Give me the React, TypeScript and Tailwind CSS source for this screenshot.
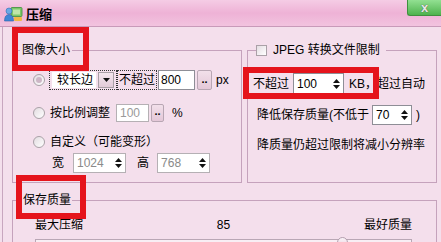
import React from "react";

function Radio({ checked }: { checked?: boolean }) {
  return (
    <span className="w-[12px] h-[12px] rounded-full border border-[#a9a1a7] bg-gradient-to-br from-[#e2dce0] to-[#ffffff] flex items-center justify-center shrink-0">
      {checked && <span className="w-[6px] h-[6px] rounded-full bg-[#cdb6c6]" />}
    </span>
  );
}

function Spin() {
  return (
    <span className="flex flex-col items-center gap-[2px] shrink-0">
      <svg width="7" height="4" viewBox="0 0 7 4">
        <path d="M3.5 0L7 4H0z" fill="#111" />
      </svg>
      <svg width="7" height="4" viewBox="0 0 7 4">
        <path d="M0 0h7L3.5 4z" fill="#111" />
      </svg>
    </span>
  );
}

function Dots({ className }: { className: string }) {
  return (
    <span
      className={
        "flex items-end justify-center pb-[4px] border border-[#b8a6b3] rounded-[2px] bg-gradient-to-b from-[#f2e0ea] to-[#e4c8d8] text-[11px] font-bold leading-none shrink-0 " +
        className
      }
    >
      ..
    </span>
  );
}

function Icon() {
  return (
    <svg width="19" height="16" viewBox="0 0 19 16" className="ml-[4px] shrink-0">
      <rect x="7" y="1.5" width="11" height="9" rx="1" fill="#7cc86a" stroke="#3d8d3a" strokeWidth="0.8" />
      <rect x="9" y="3.5" width="7" height="5" fill="#bfe6a8" />
      <circle cx="5" cy="5" r="3" fill="#6aa8e6" stroke="#2f6fb5" strokeWidth="0.6" />
      <path d="M0.5 15 Q0.5 8.5 5 8.5 Q9.5 8.5 9.5 15z" fill="#3f86d6" stroke="#2a62a8" strokeWidth="0.6" />
      <rect x="10" y="11" width="8" height="4" rx="1" fill="#f0b848" />
    </svg>
  );
}

export default function App() {
  return (
    <div className="relative w-[441px] h-[242px] overflow-hidden bg-[#f4dfec] text-[12px] text-black leading-none font-[family-name:'Liberation_Sans','Noto_Sans_CJK_SC',sans-serif]">
      {/* title bar */}
      <div className="h-[27px] flex items-start border-b border-[#c89ab9] bg-gradient-to-b from-[#f5cce5] via-[#eeb2d6] to-[#f2c3df]">
        <div className="flex items-center h-[28px]">
          <Icon />
          <span className="ml-[3px] font-bold text-[13px]">压缩</span>
        </div>
        <div className="ml-auto w-[34px] h-[16px] flex items-center justify-center rounded-bl-[3px] border-l border-b border-[#3f8f3f] bg-gradient-to-b from-[#92e092] to-[#4db34d] text-[#e8e8e8] font-bold text-[13px] [text-shadow:0_0_1px_#333]">
          x
        </div>
      </div>

      {/* body */}
      <div className="ml-[2px] h-[215px] border-l border-[#c8a6bf] pl-[9px] pr-[3px] pt-[15px]">
        <div className="flex gap-[5px]">
          {/* 图像大小 */}
          <fieldset className="w-[230px] h-[141px] border border-[#c5a2bc]">
            <legend className="ml-[7px] px-[2px] h-[16px] leading-[16px]">图像大小</legend>
            <div className="flex flex-col pl-[20px]">
              <div className="mt-[12px] h-[20px] flex items-center">
                <Radio checked />
                <span className="ml-[4px] h-[20px] flex items-center border border-dotted border-[#333] pl-[2px] pr-[2px]">
                  <span className="w-[44px] h-[16px] bg-white flex items-center pl-[5px]">较长边</span>
                  <span className="ml-[2px] w-[16px] h-[16px] border border-[#a9a0a6] bg-gradient-to-b from-[#f4e6ee] to-[#e2cbd8] flex items-center justify-center">
                    <svg width="7" height="4" viewBox="0 0 7 4">
                      <path d="M0 0h7L3.5 4z" fill="#111" />
                    </svg>
                  </span>
                </span>
                <span className="h-[20px] flex items-center border border-dotted border-[#333] px-[1px]">不超过</span>
                <span className="ml-[1px] w-[37px] h-[20px] bg-white border border-[#8e8e96] flex items-center pl-[2px]">800</span>
                <Dots className="ml-[2px] w-[15px] h-[20px]" />
                <span className="ml-[4px]">px</span>
              </div>
              <div className="mt-[13px] h-[20px] flex items-center">
                <Radio />
                <span className="ml-[5px]">按比例调整</span>
                <span className="ml-[6px] w-[33px] h-[18px] bg-white border border-[#b5b0b4] flex items-center pl-[3px] text-[#9a9a9a]">100</span>
                <Dots className="ml-[2px] w-[13px] h-[18px]" />
                <span className="ml-[8px]">%</span>
              </div>
              <div className="mt-[11px] h-[16px] flex items-center">
                <Radio />
                <span className="ml-[5px]">自定义（可能变形）</span>
              </div>
              <div className="mt-[3px] ml-[19px] h-[20px] flex items-center">
                <span>宽</span>
                <span className="ml-[9px] w-[53px] h-[20px] bg-white border border-[#b5b0b4] flex items-center justify-between pl-[3px] pr-[3px] text-[#8a8a8a]">
                  1024
                  <Spin />
                </span>
                <span className="ml-[11px]">高</span>
                <span className="ml-[8px] w-[53px] h-[20px] bg-white border border-[#b5b0b4] flex items-center justify-between pl-[3px] pr-[3px] text-[#8a8a8a]">
                  768
                  <Spin />
                </span>
              </div>
            </div>
          </fieldset>

          {/* JPEG 转换文件限制 */}
          <fieldset className="w-[190px] h-[141px] border border-[#c5a2bc]">
            <legend className="ml-[8px] pr-[6px] h-[16px] flex items-center">
              <span className="w-[11px] h-[11px] border border-[#aaa0a7] bg-gradient-to-br from-[#e4dde2] to-white" />
              <span className="ml-[6px]">JPEG 转换文件限制</span>
            </legend>
            <div className="flex flex-col pl-[5px]">
              <div className="mt-[15px] h-[21px] flex items-center">
                <span>不超过</span>
                <span className="ml-[4px] w-[51px] h-[21px] bg-white border border-[#8e8e96] flex items-center justify-between pl-[3px] pr-[3px]">
                  100
                  <Spin />
                </span>
                <span className="ml-[5px]">KB，超过自动</span>
              </div>
              <div className="mt-[11px] ml-[4px] h-[20px] flex items-center">
                <span>降低保存质量(不低于</span>
                <span className="ml-[3px] w-[40px] h-[20px] bg-white border border-[#8e8e96] flex items-center justify-between pl-[3px] pr-[3px]">
                  70
                  <Spin />
                </span>
                <span className="ml-[4px]">)</span>
              </div>
              <div className="mt-[12px] ml-[4px] h-[16px] flex items-center">降质量仍超过限制将减小分辨率</div>
            </div>
          </fieldset>
        </div>

        {/* 保存质量 */}
        <fieldset className="mt-[9px] w-[425px] h-[60px] border border-[#c5a2bc]">
          <legend className="ml-[9px] px-[1px] h-[16px] leading-[16px]">保存质量</legend>
          <div className="flex flex-col pl-[22px] pr-[24px]">
            <div className="mt-[9px] h-[16px] flex items-center justify-between">
              <span>最大压缩</span>
              <span>85</span>
              <span>最好质量</span>
            </div>
            <div className="relative mt-[6px] h-[4px] border border-[#b9a7b5] bg-[#f8eef4]">
              <span className="absolute left-[301px] top-[-3px] w-[11px] h-[11px] rounded-full border border-[#b39fae] bg-gradient-to-b from-[#fbf4f8] to-[#e6d0de]" />
            </div>
          </div>
        </fieldset>
      </div>

      {/* red annotation boxes */}
      <div className="absolute left-[12px] top-[27px] w-[77px] h-[44px] border-[6px] border-[#e5141c]" />
      <div className="absolute left-[243px] top-[67px] w-[136px] h-[32px] border-[6px] border-[#e5141c]" />
      <div className="absolute left-[16px] top-[175px] w-[70px] h-[44px] border-[6px] border-[#e5141c]" />
    </div>
  );
}
